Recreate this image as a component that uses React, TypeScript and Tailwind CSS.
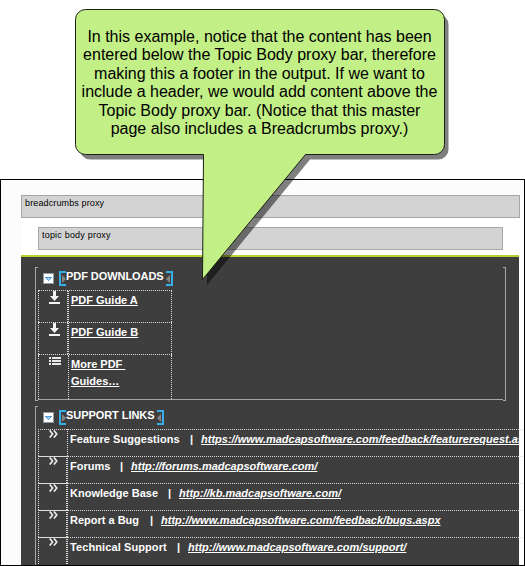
import React from "react";

function Toggle() {
  return (
    <svg width="11" height="11" viewBox="0 0 11 11" shapeRendering="crispEdges">
      <rect x="0.5" y="0.5" width="10" height="10" fill="#fff" stroke="#909aa3" />
      <path d="M2 4h7v1h-1v1h-1v1h-1v1h-1v-1h-1v-1h-1v-1h-1z" fill="#4f9ad6" />
      <path d="M4 5h3v1h-1v1h-1v-1h-1z" fill="#a5d8fb" />
    </svg>
  );
}

function Marker({ flip = false }: { flip?: boolean }) {
  return (
    <svg width="7" height="15" viewBox="0 0 7 15" className={"shrink-0 " + (flip ? "-scale-x-100" : "")}>
      <path d="M7 1H1V14H7" fill="none" stroke="#35aee9" strokeWidth="2" />
      <path d="M3 4L7 8L3 12Z" fill="#858585" />
    </svg>
  );
}

function Download() {
  return (
    <svg width="11" height="13" viewBox="0 0 11 13" fill="#f4f4f4">
      <path d="M4 0h3v5h3L5.500 10 1 5h3z" />
      <rect y="11" width="11" height="2" />
    </svg>
  );
}

function ListIcon() {
  return (
    <svg width="12" height="9" viewBox="0 0 12 9" fill="#e8e8e8" shapeRendering="crispEdges">
      <path d="M0 0h2v2H0zM3 0h9v2H3zM0 3h2v2H0zM3 3h9v2H3zM0 6h2v2H0zM3 6h9v2H3z" />
    </svg>
  );
}

function Chevrons() {
  return (
    <svg width="9" height="8" viewBox="0 0 9 8" fill="none" stroke="#ececec" strokeWidth="1.6">
      <path d="M0.700 0.400L3.600 4L0.700 7.600M4.900 0.400L7.800 4L4.900 7.600" />
    </svg>
  );
}

function Heading({ children, className }: { children: React.ReactNode; className: string }) {
  return (
    <div className="flex h-[20px] pl-[7px]">
      <div className="mr-[5px] mt-[2px] h-[11px] shrink-0"><Toggle /></div>
      <Marker />
      <div className={"h-[12px] shrink-0 whitespace-nowrap text-[11px] font-bold leading-[10px] tracking-[-0.06px] text-white " + className}>{children}</div>
      <Marker flip />
    </div>
  );
}

const links = [
  { label: "Feature Suggestions", w: "w-[120px] tracking-[0.04px]", url: "https://www.madcapsoftware.com/feedback/featurerequest.aspx" },
  { label: "Forums", w: "w-[50px]", url: "http://forums.madcapsoftware.com/" },
  { label: "Knowledge Base", w: "w-[98px]", url: "http://kb.madcapsoftware.com/" },
  { label: "Report a Bug", w: "w-[80px]", url: "http://www.madcapsoftware.com/feedback/bugs.aspx" },
  { label: "Technical Support", w: "w-[107px] tracking-[0.1px]", url: "http://www.madcapsoftware.com/support/" },
];

const pdfs = [
  { lines: ["PDF Guide A"], h: "h-[32px]", icon: <Download /> },
  { lines: ["PDF Guide B"], h: "h-[32px]", icon: <Download /> },
  { lines: ["More PDF\u00a0", "Guides…"], h: "h-[45px]", icon: <ListIcon /> },
];

export default function App() {
  return (
    <div className="relative h-[566px] w-[525px] overflow-hidden bg-white pt-[179px] font-['Liberation_Sans',Arial,sans-serif]">
      <div className="h-[387px] border border-black bg-[#fcfcfc] pl-[20px] pt-[15px]">
        <div className="h-[370px] overflow-hidden bg-white">
          <div className="h-[23px] w-[499px] border border-[#a6a6a6] bg-[#d3d3d3] pl-[3px] pt-[1px] text-[9px] leading-[12px] tracking-[0.13px] text-black">
            breadcrumbs proxy
          </div>
          <div className="ml-[17px] mt-[9px] h-[23px] w-[465px] border border-[#a6a6a6] bg-[#d3d3d3] pl-[3px] pt-[1px] text-[9px] leading-[12px] tracking-[0.2px] text-black">
            topic body proxy
          </div>
          <div className="mt-[5px] h-[310px] w-[498px] border-t-2 border-[#b9d02c] bg-[#3e3e3e] pl-[14px] pt-[10px]">
            <div className="flex h-[134px] w-[471px]">
              <div className="w-[3px] border-y border-l border-[#a6a6a6]" />
              <div className="mb-px w-[465px] border-b border-[#a6a6a6] pt-[4px]">
                <div className="-ml-[2px]"><Heading className="w-[100px]">PDF DOWNLOADS</Heading></div>
                <div className="-mt-px w-[134px]">
                  {pdfs.map((p, i) => (
                    <div key={i} className={"flex border-t border-dotted border-[#dcdcdc] " + p.h}>
                      <div className={"flex w-[30px] items-start border-l border-dotted border-[#dcdcdc] pl-[10px] " + (i < 2 ? "border-r" : "pt-[2px]")}>{p.icon}</div>
                      <div className="w-[104px] border-x border-dotted border-[#dcdcdc] pl-[2px] pt-px text-[11px] font-bold leading-[17px] text-white">
                        {p.lines.map((l) => (
                          <div key={l} className="h-[17px] whitespace-nowrap underline underline-offset-1">{l}</div>
                        ))}
                      </div>
                    </div>
                  ))}
                </div>
              </div>
              <div className="w-[3px] border-y border-r border-[#a6a6a6]" />
            </div>
            <div className="mt-[5px] flex h-[170px] w-[490px]">
              <div className="w-[3px] shrink-0 border-l border-t border-[#a6a6a6]" />
              <div className="w-[487px] shrink-0 pt-[4px]">
                <div className="-ml-[2px]"><Heading className="w-[91px]">SUPPORT LINKS</Heading></div>
                <div className="-mt-px">
                  {links.map((r, i) => (
                    <div key={r.label} className="flex h-[27px]">
                      <div className={"w-[29px] shrink-0 border-l border-t border-dotted border-[#dcdcdc] pl-[10px] " + (i ? "border-r [border-top-style:solid]" : "")}><Chevrons /></div>
                      <div className="w-[458px] shrink-0 border-l border-t border-dotted border-[#dcdcdc]">
                        <div className="flex w-[451px] overflow-hidden whitespace-nowrap pl-[2px] pt-px text-[11px] font-bold leading-[17px] text-white">
                          <span className={"shrink-0 " + r.w}>{r.label}</span>
                          <span className="w-[11px] shrink-0">|</span>
                          <span className="italic underline underline-offset-1">{r.url}</span>
                        </div>
                      </div>
                    </div>
                  ))}
                </div>
              </div>
            </div>
          </div>
        </div>
      </div>
      <div className="absolute left-0 top-0 h-[300px] w-[525px]">
        <svg width="525" height="300" className="absolute left-0 top-0">
          <path d="M85.500 14.500H438.500A10 10 0 0 1 448.500 24.500V149.500A10 10 0 0 1 438.500 159.500H310L207 285L208.500 159.500H90A10 10 0 0 1 80 149.500V20Z" fill="#000" fillOpacity="0.5" />
          <path d="M85.500 9.500H434.500A10 10 0 0 1 444.500 19.500V144.500A10 10 0 0 1 434.500 154.500H305.500L202.500 279.500L203.500 154.500H85.500A10 10 0 0 1 75.500 144.500V19.500A10 10 0 0 1 85.500 9.500Z" fill="#c2ef86" stroke="#1c2014" />
        </svg>
        <div className="relative ml-[59.5px] mt-[28px] w-[400px] whitespace-nowrap text-center text-[16px] leading-[18.4px] text-black">
          <div>In this example, notice that the content has been</div>
          <div>entered below the Topic Body proxy bar, therefore</div>
          <div>making this a footer in the output. If we want to</div>
          <div>include a header, we would add content above the</div>
          <div>Topic Body proxy bar. (Notice that this master</div>
          <div>page also includes a Breadcrumbs proxy.)</div>
        </div>
      </div>
    </div>
  );
}
